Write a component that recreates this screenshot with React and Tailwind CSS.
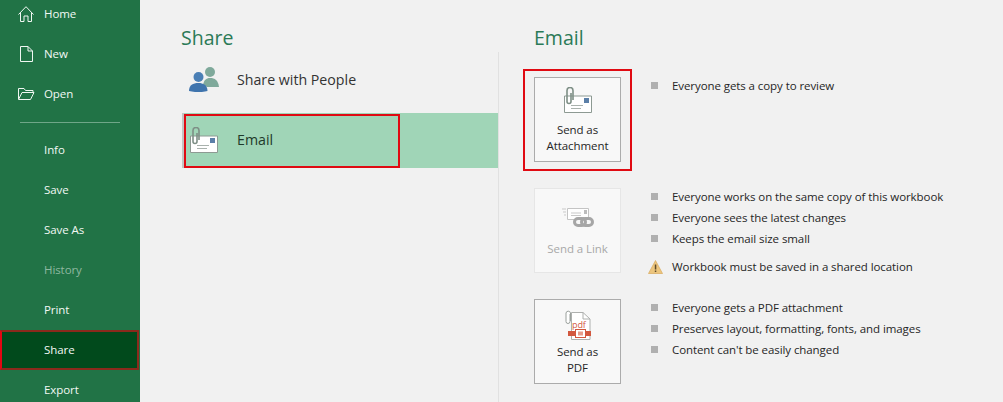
const FONT = "font-['Open_Sans','Noto_Sans',sans-serif]";

const HomeIcon = () => (
  <svg width="16" height="16" viewBox="0 0 16 16" fill="none" stroke="#f0f7f2" strokeWidth="1">
    <path d="M0.5 8.5 L8 0.7 L15.5 8.5 M2.5 6.5 V15.5 H6 V10 H10 V15.5 H13.5 V6.5" />
  </svg>
);

const NewIcon = () => (
  <svg width="13" height="16" viewBox="0 0 13 16" fill="none" stroke="#f0f7f2" strokeWidth="1">
    <path d="M0.5 0.5 H8 L12.5 5 V15.5 H0.5 Z M8 0.5 V5 H12.5" />
  </svg>
);

const OpenIcon = () => (
  <svg width="17" height="12" viewBox="0 0 17 12" fill="none" stroke="#f0f7f2" strokeWidth="1">
    <path d="M0.5 11 V0.5 H6 L7.5 2.5 H15 V4 M0.5 11.5 L4 4.5 H16 L12.5 11.5 Z" />
  </svg>
);

const PeopleIcon = () => (
  <svg width="30" height="25" viewBox="0 0 30 25">
    <circle cx="21" cy="5" r="5" fill="#7fa99b" />
    <path d="M14 18 C15 13 17 11 21 11 C26 11 29 13 30 20 H18 Z" fill="#7fa99b" />
    <circle cx="9.5" cy="10" r="5" fill="#4a7fb5" />
    <path d="M0 24 C0 18 4 16 9.5 16 C14 16 18.5 18 18.5 24 C14 25.5 5 25.5 0 24 Z" fill="#3f74ad" />
  </svg>
);

const MailIcon = () => (
  <svg width="28" height="26" viewBox="0 0 28 26" fill="none">
    <path d="M0.5 9 H27.5 V25.5 H0.5 Z" fill="#fff" stroke="#8d9a93" />
    <rect x="20" y="11" width="5" height="5" fill="#5b7fa8" />
    <path d="M7 18.5 H19 M7 21.5 H17" stroke="#a9b2ad" />
    <path d="M9 13 V3.5 A3 3 0 0 0 3 3.5 V14.5 A2 2 0 0 0 7 14.5 V6" stroke="#7e8f86" strokeWidth="1.6" />
  </svg>
);

const LinkIcon = () => (
  <svg width="32" height="21" viewBox="0 0 32 21" fill="none">
    <path d="M5.5 1.5 H26.5 V12.5 H5.5 Z" fill="#fff" stroke="#c4c4c4" />
    <rect x="22" y="3" width="3" height="4" fill="#bdbdbd" />
    <path d="M9 6 H19 M9 8.5 H19 M0 2 H4 M1 5 H4 M2 8 H4" stroke="#c9c9c9" />
    <rect x="12.5" y="11.5" width="11" height="7" rx="3.5" stroke="#a6a6a6" strokeWidth="3" />
    <rect x="19.5" y="11.5" width="11" height="7" rx="3.5" stroke="#a6a6a6" strokeWidth="3" />
  </svg>
);

const PdfIcon = () => (
  <svg width="26" height="30" viewBox="0 0 26 30" fill="none">
    <path d="M6.5 2.5 H18 L25 9 V29.5 H6.5 Z" fill="#fff" stroke="#aeb0ae" />
    <path d="M18 2.5 V9 H25" stroke="#aeb0ae" />
    <path d="M5.5 11 V3 A2.3 2.3 0 0 0 1 3 V11.5 A1.8 1.8 0 0 0 5 11.5 V4" stroke="#9aa09c" fill="#fff" />
    <text x="7" y="18" fontSize="9" fill="#d2583f" fontFamily="Open Sans, sans-serif">pdf</text>
    <rect x="3" y="21" width="23" height="5" fill="#d2583f" />
    <rect x="10.5" y="19.5" width="10" height="8" fill="#fff" stroke="#d2583f" />
    <rect x="13" y="21.5" width="5" height="4" fill="#e79b8a" />
  </svg>
);

const WarnIcon = () => (
  <svg width="15" height="14" viewBox="0 0 15 14">
    <path d="M7.5 0.5 L14.5 13.5 H0.5 Z" fill="#ecc57d" stroke="#d9a95c" strokeWidth="0.7" />
    <rect x="6.8" y="4.5" width="1.5" height="5" fill="#5d4a2a" />
    <rect x="6.8" y="10.5" width="1.5" height="1.5" fill="#5d4a2a" />
  </svg>
);

const navItems = [
  { label: "Info" },
  { label: "Save" },
  { label: "Save As" },
  { label: "History", disabled: true },
  { label: "Print" },
  { label: "Share", active: true },
  { label: "Export" },
];

const NavRow = ({ icon, label, disabled, active }) => (
  <div
    className={`relative flex items-center h-10 text-[11.5px] tracking-[-0.08px] ${
      disabled ? "text-[#8fb8a0]" : "text-[#f2f8f4]"
    } ${active ? "bg-[#014a1c] border-2 border-[#8a2a1c] border-l-[#e30613] w-[139px]" : ""}`}
  >
    {icon ? (
      <span className="w-[44px] flex justify-center pl-[12px] pr-[4px] shrink-0">{icon}</span>
    ) : (
      <span className={active ? "w-[42px] shrink-0" : "w-[44px] shrink-0"} />
    )}
    <span>{label}</span>
  </div>
);

const Bullet = ({ children, warn }) => (
  <li className={`flex items-center h-[21px] text-[11.5px] tracking-[-0.08px] text-[#262626] ${warn ? "mt-[7px]" : ""}`}>
    {warn ? (
      <span className="w-[24px] -ml-[3px] flex shrink-0">
        <WarnIcon />
      </span>
    ) : (
      <span className="w-[21px] flex shrink-0">
        <span className="w-[7px] h-[7px] bg-[#b0b0b0]" />
      </span>
    )}
    {children}
  </li>
);

const ActionCard = ({ icon, iconClass, label, disabled, highlighted, bullets }) => (
  <div className="flex h-[85px]">
    <div className="relative shrink-0">
      <div
        className={`w-[87px] h-[85px] flex flex-col items-center border bg-[#f8f8f8] text-[11.5px] tracking-[-0.08px] leading-[16px] text-center ${
          disabled ? "border-[#e6e6e6] text-[#a8a8a8]" : "border-[#ababab] text-[#262626]"
        }`}
      >
        <div className={`flex justify-center ${iconClass}`}>{icon}</div>
        <span>{label}</span>
      </div>
      {highlighted && (
        <div className="absolute -left-[11px] -top-[8px] w-[109px] h-[102px] border-2 border-[#e00a12]" />
      )}
    </div>
    <ul className="ml-[30px] -mt-[2px]">
      {bullets.map((b) => (
        <Bullet key={b.text} warn={b.warn}>
          {b.text}
        </Bullet>
      ))}
    </ul>
  </div>
);

const App = () => {
  return (
    <div className={`${FONT} w-[1003px] h-[402px] overflow-hidden flex bg-[#f1f1f1]`}>
      {/* Sidebar */}
      <div className="w-[140px] shrink-0 bg-[#217346] -mt-[6px]">
        <NavRow icon={<HomeIcon />} label="Home" />
        <NavRow icon={<NewIcon />} label="New" />
        <NavRow icon={<OpenIcon />} label="Open" />
        <div className="mx-5 mt-[8px] mb-[7px] border-t border-[#6fa688]" />
        {navItems.map((item) => (
          <NavRow key={item.label} {...item} />
        ))}
      </div>

      {/* Share options */}
      <div className="w-[359px] shrink-0 flex flex-col">
        <h1 className="h-[52px] pl-[41px] pt-[20px] text-[19.5px] leading-[36px] text-[#2b7a57]">Share</h1>
        <div className="flex-1 ml-[42px] border-r border-[#e1e1e1]">
          <div className="flex items-center h-[55px] text-[14.2px] text-[#333]">
            <span className="w-[55px] pl-[7px] shrink-0">
              <PeopleIcon />
            </span>
            Share with People
          </div>
          <div className="relative mt-[6px] flex items-center h-[55px] pb-[2px] bg-[#a0d5b7] text-[14.2px] text-[#1e3a2a] border-l-2 border-[#c4c4c4]">
            <span className="w-[53px] pl-[6px] shrink-0">
              <MailIcon />
            </span>
            Email
            <div className="absolute left-0 top-[1px] w-[216px] h-[54px] border-2 border-[#e00a12]" />
          </div>
        </div>
      </div>

      {/* Email options */}
      <div className="flex-1 pl-[35px]">
        <h2 className="h-[52px] pt-[20px] text-[19.5px] leading-[36px] text-[#2b7a57]">Email</h2>
        <div className="mt-[25px] flex flex-col gap-[26px]">
          <ActionCard
            highlighted
            icon={<MailIcon />}
            iconClass="pt-[9px] pb-[9px]"
            label={<>Send as<br />Attachment</>}
            bullets={[{ text: "Everyone gets a copy to review" }]}
          />
          <ActionCard
            disabled
            icon={<LinkIcon />}
            iconClass="pt-[18px] pb-[13px]"
            label="Send a Link"
            bullets={[
              { text: "Everyone works on the same copy of this workbook" },
              { text: "Everyone sees the latest changes" },
              { text: "Keeps the email size small" },
              { text: "Workbook must be saved in a shared location", warn: true },
            ]}
          />
          <ActionCard
            icon={<PdfIcon />}
            iconClass="pt-[10px] pb-[4px]"
            label={<>Send as<br />PDF</>}
            bullets={[
              { text: "Everyone gets a PDF attachment" },
              { text: "Preserves layout, formatting, fonts, and images" },
              { text: "Content can't be easily changed" },
            ]}
          />
        </div>
      </div>
    </div>
  );
};

export default App;
